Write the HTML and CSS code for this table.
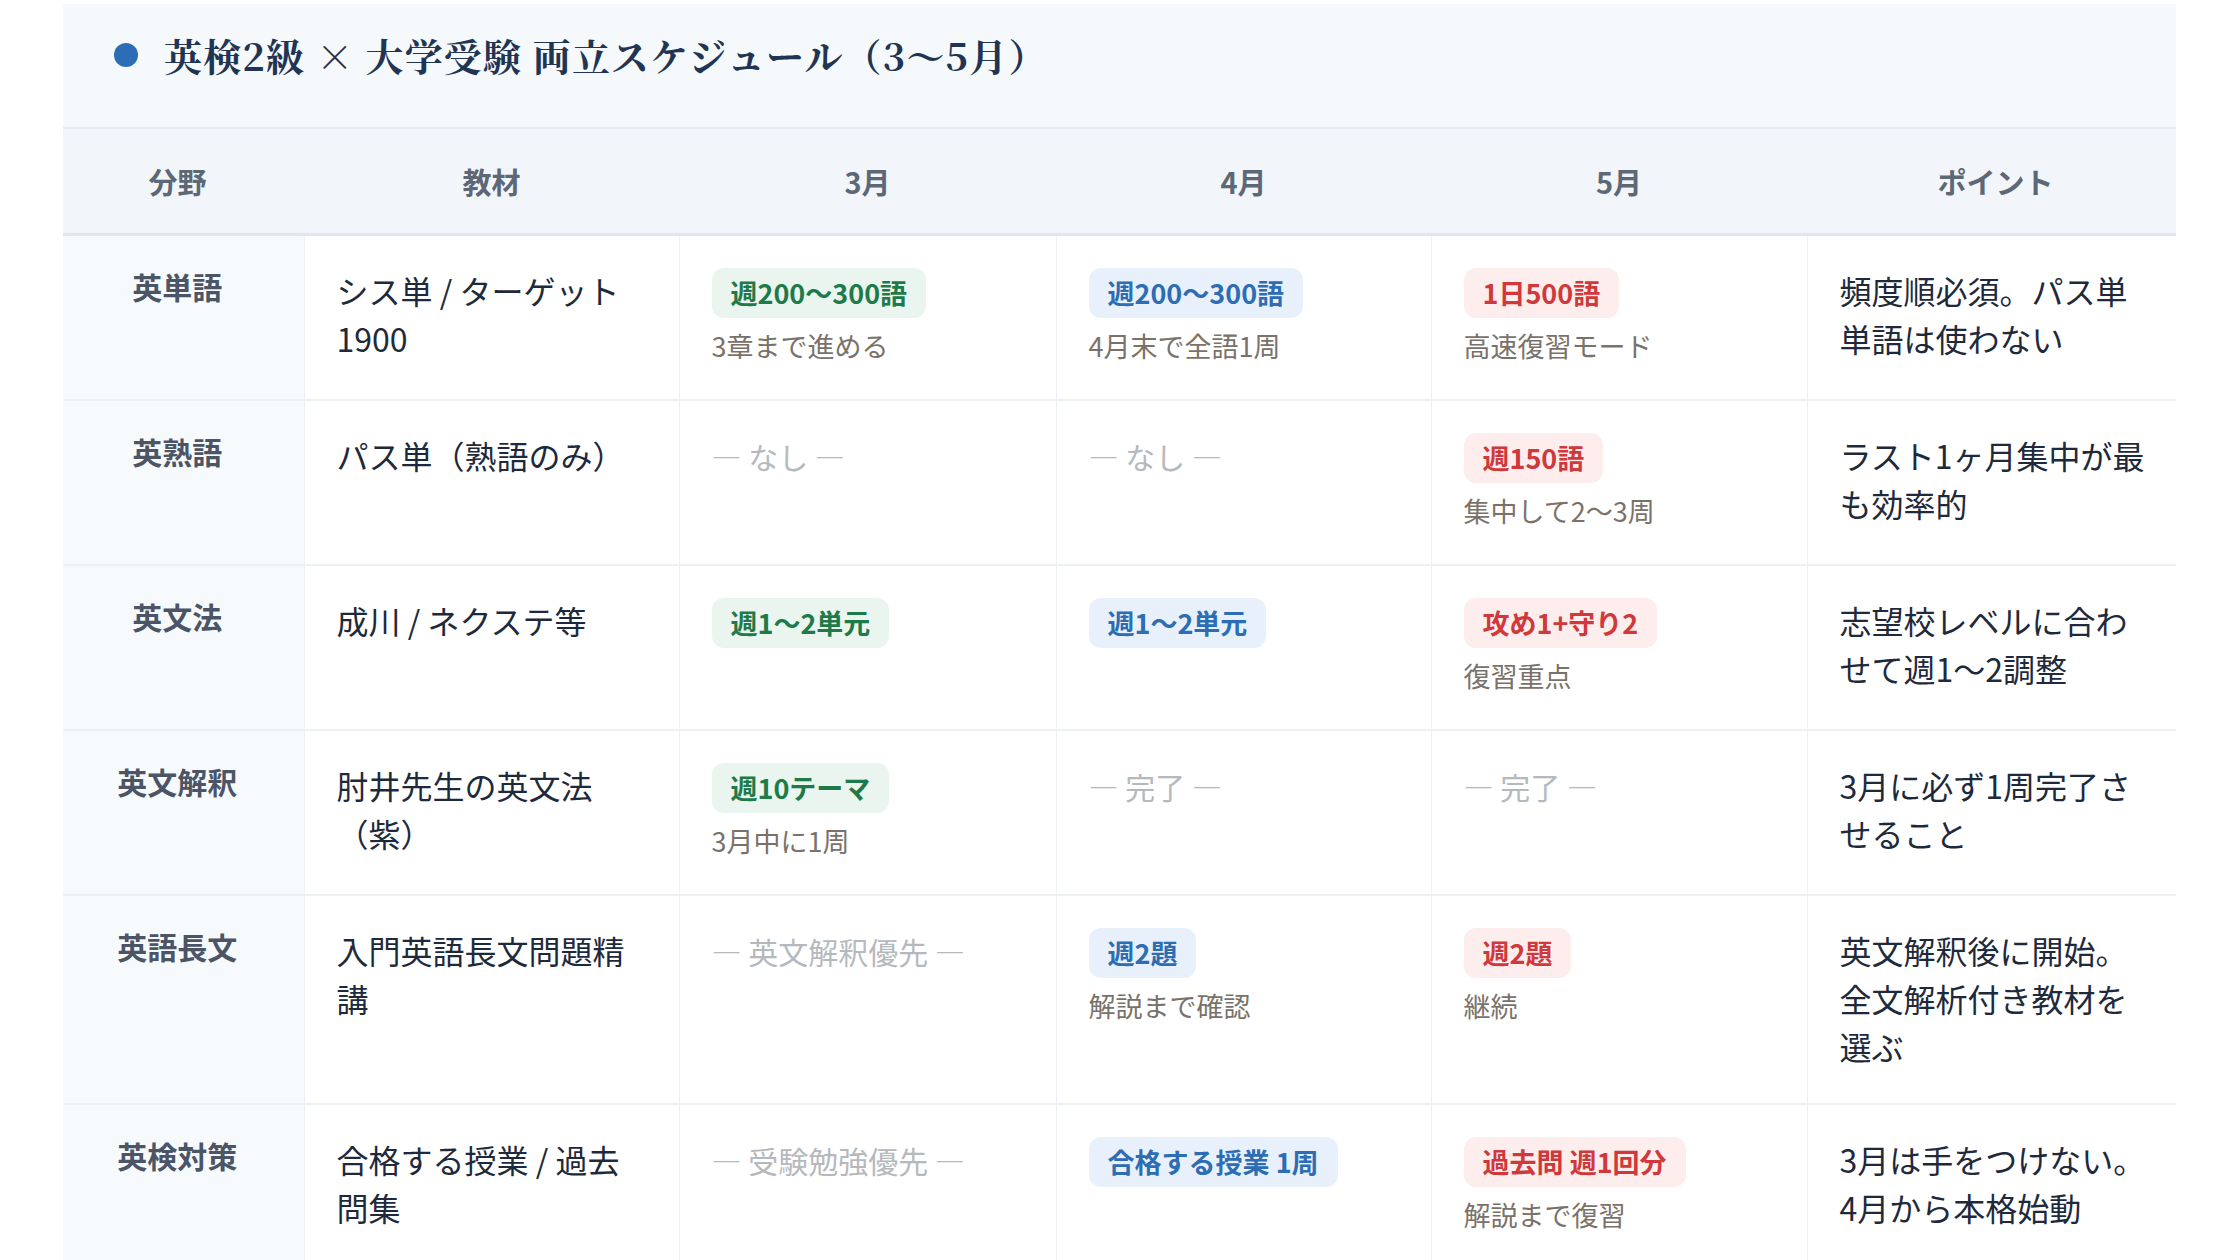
FILE: index.html
```html
<!DOCTYPE html>
<html lang="ja">
<head>
  <meta charset="UTF-8" />
  <title>英検2級 × 大学受験 両立スケジュール</title>
  <link rel="stylesheet" href="styles.css">
</head>
<body>
  <div class="card">
    <div class="card-head">
      <h2 class="title"><span class="dot"></span>英検2級 × 大学受験 両立スケジュール（3〜5月）</h2>
    </div>
    <table class="schedule">
      <colgroup>
        <col class="c-field">
        <col class="c-book">
        <col class="c-m3">
        <col class="c-m4">
        <col class="c-m5">
        <col>
      </colgroup>
      <thead>
        <tr>
          <th class="field">分野</th>
          <th>教材</th>
          <th>3月</th>
          <th>4月</th>
          <th>5月</th>
          <th class="point">ポイント</th>
        </tr>
      </thead>
      <tbody>
        <tr>
          <td class="field">英単語</td>
          <td>シス単 / ターゲット 1900</td>
          <td><div class="tag green">週200〜300語</div><div class="note">3章まで進める</div></td>
          <td><div class="tag blue">週200〜300語</div><div class="note">4月末で全語1周</div></td>
          <td><div class="tag red">1日500語</div><div class="note">高速復習モード</div></td>
          <td>頻度順必須。パス単単語は使わない</td>
        </tr>
        <tr>
          <td class="field">英熟語</td>
          <td>パス単（熟語のみ）</td>
          <td><span class="none">— なし —</span></td>
          <td><span class="none">— なし —</span></td>
          <td><div class="tag red">週150語</div><div class="note">集中して2〜3周</div></td>
          <td>ラスト1ヶ月集中が最も効率的</td>
        </tr>
        <tr>
          <td class="field">英文法</td>
          <td>成川 / ネクステ等</td>
          <td><div class="tag green">週1〜2単元</div></td>
          <td><div class="tag blue">週1〜2単元</div></td>
          <td><div class="tag red">攻め1+守り2</div><div class="note">復習重点</div></td>
          <td>志望校レベルに合わせて週1〜2調整</td>
        </tr>
        <tr>
          <td class="field">英文解釈</td>
          <td>肘井先生の英文法（紫）</td>
          <td><div class="tag green">週10テーマ</div><div class="note">3月中に1周</div></td>
          <td><span class="none">— 完了 —</span></td>
          <td><span class="none">— 完了 —</span></td>
          <td>3月に必ず1周完了させること</td>
        </tr>
        <tr>
          <td class="field">英語長文</td>
          <td>入門英語長文問題精講</td>
          <td><span class="none">— 英文解釈優先 —</span></td>
          <td><div class="tag blue">週2題</div><div class="note">解説まで確認</div></td>
          <td><div class="tag red">週2題</div><div class="note">継続</div></td>
          <td>英文解釈後に開始。全文解析付き教材を選ぶ</td>
        </tr>
        <tr>
          <td class="field">英検対策</td>
          <td>合格する授業 / 過去問集</td>
          <td><span class="none">— 受験勉強優先 —</span></td>
          <td><div class="tag blue">合格する授業 1周</div></td>
          <td><div class="tag red">過去問 週1回分</div><div class="note">解説まで復習</div></td>
          <td>3月は手をつけない。4月から本格始動</td>
        </tr>
      </tbody>
    </table>
  </div>
</body>
</html>
```

FILE: styles.css
```css
body {
  margin: 0;
  background: #ffffff;
  font-family: "Noto Sans CJK JP", "Noto Sans", sans-serif;
  color: #1e2a3b;
}
.card {
  margin: 4px 64px 0 63px;
  background: #ffffff;
}
.card-head {
  background: #f5f9fc;
  padding: 27px 0 48px 51px;
  border-bottom: 2px solid #e5eaf0;
}
.title {
  margin: 0;
  display: flex;
  align-items: center;
  font-family: "Noto Serif CJK JP", "Noto Sans CJK JP", serif;
  font-size: 38px;
  line-height: 48px;
  font-weight: 700;
  color: #1f3553;
  letter-spacing: 0.03em;
}
.dot {
  width: 24px;
  height: 24px;
  border-radius: 50%;
  background: #2d6db5;
  margin-right: 26px;
  flex-shrink: 0;
}
.schedule {
  width: 100%;
  border-collapse: collapse;
  table-layout: fixed;
}
.c-field { width: 241px; }
.c-book { width: 375px; }
.c-m3 { width: 377px; }
.c-m4 { width: 375px; }
.c-m5 { width: 376px; }
.schedule th {
  background: #f2f6fa;
  height: 104px;
  padding: 0;
  font-size: 29px;
  font-weight: 700;
  color: #5d6876;
  text-align: center;
  border-bottom: 3px solid #e1e5ee;
}
.schedule th.field {
  padding-right: 12px;
}
.schedule th.point {
  padding-left: 8px;
}
.schedule td {
  vertical-align: top;
  padding: 30px 28px 33px 32px;
  font-size: 32px;
  line-height: 48px;
  border-left: 1px solid #edf0f4;
  border-right: 1px solid #edf0f4;
  border-bottom: 2px solid #eef1f4;
}
.schedule td:first-child {
  border-left: none;
}
.schedule td:last-child {
  border-right: none;
}
.schedule td.field {
  background: #f7fafd;
  text-align: center;
  padding-left: 0;
  padding-right: 12px;
  font-size: 30px;
  line-height: 40px;
  font-weight: 700;
  color: #4b5566;
}
.tag {
  display: inline-block;
  padding: 6px 19px;
  border-radius: 12px;
  font-size: 27px;
  line-height: 38px;
  font-weight: 700;
}
.tag.green {
  background: #e9f5ee;
  color: #1f7a4a;
}
.tag.blue {
  background: #e8f1fb;
  color: #2c6db3;
}
.tag.red {
  background: #fdeded;
  color: #d0393b;
}
.note {
  margin-top: 8px;
  font-size: 27px;
  line-height: 40px;
  color: #7a726a;
}
.none {
  font-size: 30px;
  color: #b5b9be;
}
```
